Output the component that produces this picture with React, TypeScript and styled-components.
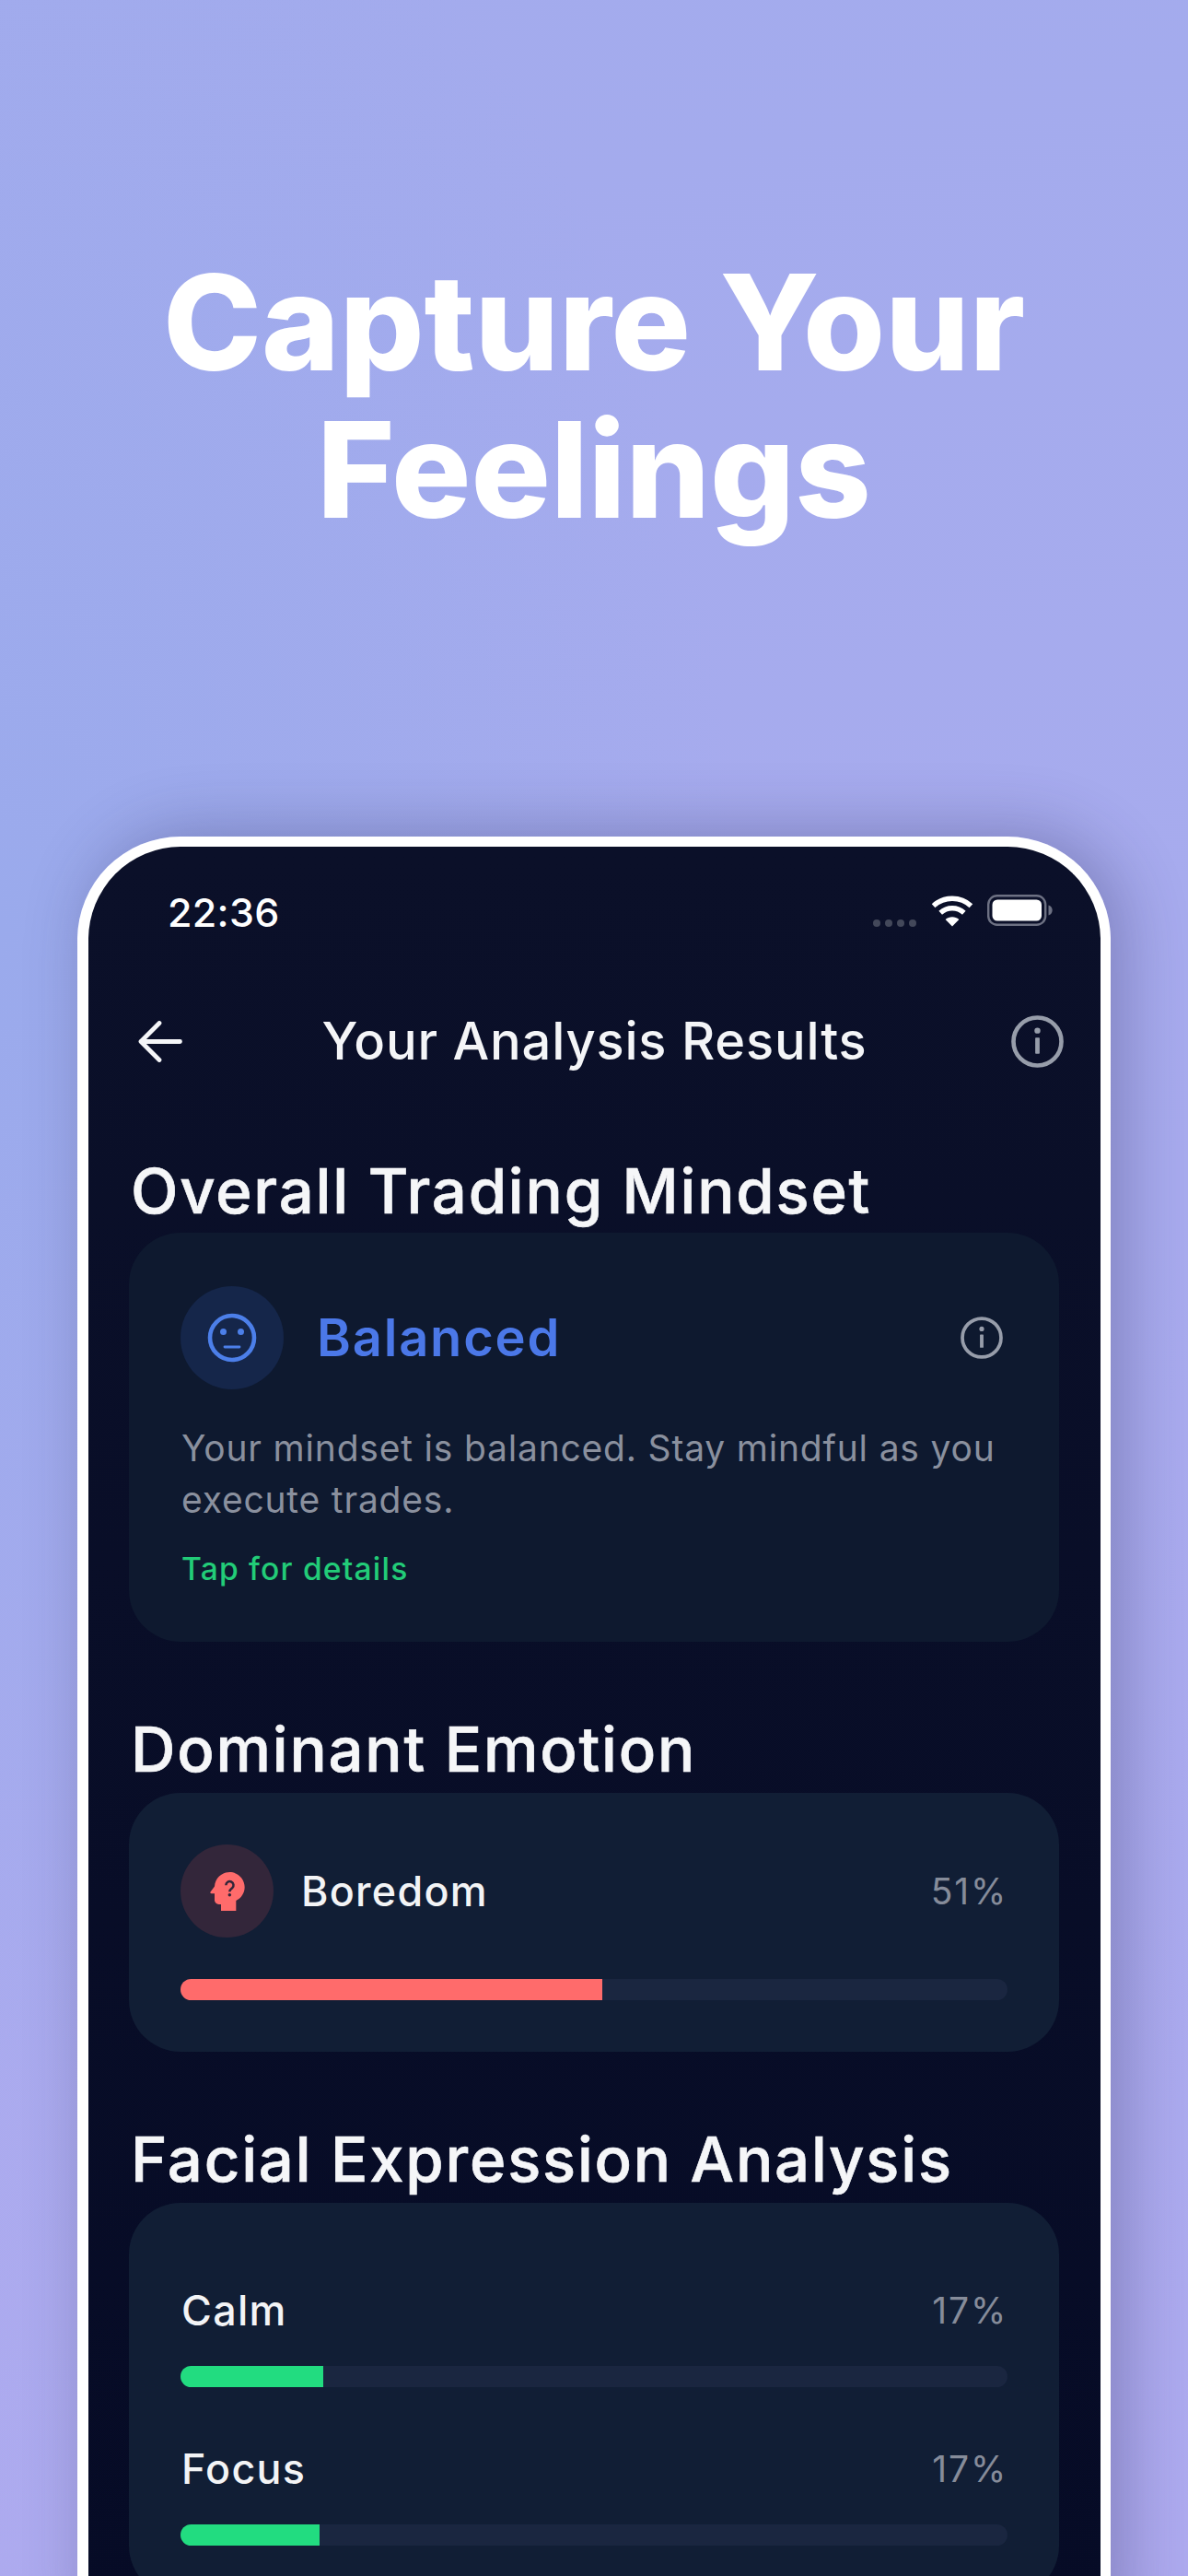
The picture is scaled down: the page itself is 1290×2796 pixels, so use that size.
import React from 'react';
import styled, { createGlobalStyle } from 'styled-components';

const Global = createGlobalStyle`
  html, body { margin: 0; padding: 0; }
  body { font-family: Inter, "Noto Sans", sans-serif; -webkit-font-smoothing: antialiased; }
`;

const Page = styled.div`
  width: 1290px;
  height: 2796px;
  overflow: hidden;
  box-sizing: border-box;
  padding-top: 270px;
  background:
    radial-gradient(ellipse 800px 1300px at 0% 36%, #9aaaec 0%, rgba(154, 170, 236, 0) 100%),
    linear-gradient(170deg, #a3abed 0%, #a8abee 50%, #aeaaef 100%);
`;

const Headline = styled.h1`
  margin: 0 0 318px;
  font-size: 144px;
  line-height: 160px;
  font-weight: 800;
  color: #fff;
  text-align: center;
`;

const Phone = styled.div`
  margin-left: 84px;
  width: 1122px;
  height: 1950px;
  box-sizing: border-box;
  border-style: solid;
  border-color: #fff;
  border-width: 11px 11px 0 12px;
  border-radius: 112px 112px 0 0;
  box-shadow: 14px -6px 70px rgba(40, 40, 90, 0.32);
  background: linear-gradient(180deg, #0b1029 0%, #060b26 100%);
  color: #fff;
`;

const StatusBar = styled.div`
  height: 169px;
  box-sizing: border-box;
  padding: 50px 52px 0 86px;
  display: flex;
  justify-content: space-between;
  align-items: flex-start;
`;

const Time = styled.span`
  font-size: 43px;
  line-height: 42px;
  font-weight: 500;
  letter-spacing: 0.3px;
`;

const StatusIcons = styled.div`
  display: flex;
  align-items: flex-start;
  gap: 15px;
  padding-top: 2px;
`;

const Dots = styled.div`
  display: flex;
  gap: 5px;
  margin: 27px 1px 0 0;
`;

const Dot = styled.i`
  width: 8px;
  height: 8px;
  border-radius: 50%;
  background: #43485a;
`;

const Nav = styled.header`
  height: 84px;
  padding: 0 40px;
  display: grid;
  grid-template-columns: 1fr auto 1fr;
  align-items: center;
`;

const NavTitle = styled.h2`
  margin: 0;
  font-size: 56px;
  line-height: 84px;
  font-weight: 500;
  letter-spacing: 0.8px;
  color: #f4f5f7;
`;

const NavEnd = styled.div`
  justify-self: end;
  display: flex;
`;

const NavStart = styled.div`
  display: flex;
  padding-left: 14px;
`;

const Content = styled.main`
  padding: 80px 45px 0 44px;
`;

const SectionTitle = styled.h3<{ $gap: number }>`
  margin: 0 0 ${p => p.$gap}px;
  padding-left: 2px;
  font-size: 67px;
  line-height: 82px;
  font-weight: 500;
  letter-spacing: 1.8px;
  -webkit-text-stroke: 0.7px #f5f6f8;
  color: #f5f6f8;
`;

const Card = styled.section<{ $bg: string; $pad: string }>`
  background: ${p => p.$bg};
  border-radius: 56px;
  padding: ${p => p.$pad};
  margin-bottom: 76px;
`;

const MindsetRow = styled.div`
  display: flex;
  align-items: center;
  margin-bottom: 36px;
`;

const IconCircle = styled.div<{ $size: number; $bg: string }>`
  flex: none;
  width: ${p => p.$size}px;
  height: ${p => p.$size}px;
  border-radius: 50%;
  background: ${p => p.$bg};
  display: flex;
  align-items: center;
  justify-content: center;
`;

const MindsetName = styled.span`
  margin-left: 36px;
  flex: 1;
  font-size: 56px;
  font-weight: 600;
  letter-spacing: 1.8px;
  color: #4b78e8;
`;

const CardInfo = styled.div`
  display: flex;
  margin-right: 5px;
`;

const Description = styled.p`
  margin: 0 0 27px;
  padding-left: 1px;
  font-size: 39px;
  line-height: 56px;
  letter-spacing: 0.8px;
  color: #8a909e;
`;

const TapLink = styled.span`
  display: block;
  padding-left: 1px;
  font-size: 33.6px;
  line-height: 40px;
  font-weight: 500;
  letter-spacing: 1.2px;
  color: #22cc78;
`;

const EmotionRow = styled.div`
  display: flex;
  align-items: center;
  margin-bottom: 45px;
`;

const EmotionName = styled.span`
  margin-left: 30px;
  flex: 1;
  font-size: 44.8px;
  font-weight: 500;
  letter-spacing: 1.3px;
  color: #f3f4f6;
`;

const Percent = styled.span`
  font-size: 39px;
  line-height: 54px;
  letter-spacing: 1.8px;
  color: #868c9a;
`;

const LabelRow = styled.div`
  display: flex;
  justify-content: space-between;
  align-items: center;
  margin-bottom: 33px;
`;

const Label = styled.span`
  padding-left: 1px;
  font-size: 44.8px;
  line-height: 54px;
  font-weight: 500;
  letter-spacing: 1.3px;
  color: #f3f4f6;
`;

const Track = styled.div<{ $mb?: number }>`
  height: 23px;
  border-radius: 11.5px;
  background: #1a2640;
  overflow: hidden;
  margin-bottom: ${p => p.$mb ?? 0}px;
`;

const Fill = styled.div<{ $color: string }>`
  height: 100%;
  background: ${p => p.$color};
`;

const InfoIcon = ({ size, color }: { size: number; color: string }) => (
  <svg width={size} height={size} viewBox="0 0 24 24" fill="none">
    <circle cx="12" cy="12" r="10.95" stroke={color} strokeWidth="1.95" />
    <rect x="11" y="10.2" width="2" height="7.4" rx="0.3" fill={color} />
    <circle cx="12" cy="7" r="1.35" fill={color} />
  </svg>
);

const BackArrow = () => (
  <svg width="48" height="45" viewBox="0 0 48 45" fill="none" stroke="#f5f6f8" strokeWidth="4.8" strokeLinecap="round" strokeLinejoin="round">
    <path d="M45.5 22.5H3M23 2.5 3 22.5l20 20" />
  </svg>
);

const Wifi = () => (
  <svg width="46" height="35" viewBox="0 0 46 35" fill="none" stroke="#fff" strokeWidth="5.4">
    <path d="M2.6 12.2C14 1.6 32 1.6 43.4 12.2" />
    <path d="M10.2 19.7c7.3-6.6 18.3-6.6 25.6 0" />
    <path d="M23 34.5 15.6 27c4.2-3.7 10.6-3.7 14.8 0z" fill="#fff" stroke="none" />
  </svg>
);

const Battery = () => (
  <svg width="71" height="34" viewBox="0 0 71 34" fill="none">
    <rect x="1.2" y="1.2" width="62" height="31.6" rx="9.5" stroke="#6d7183" strokeWidth="2.4" />
    <rect x="5.5" y="5.5" width="53.5" height="23" rx="5.5" fill="#fff" />
    <path d="M66.5 11.5c2.6.6 4.2 3 4.2 5.500s-1.600 4.900-4.200 5.500z" fill="#6d7183" />
  </svg>
);

const NeutralFace = () => (
  <svg width="54" height="54" viewBox="0 0 54 54" fill="none">
    <circle cx="27" cy="27" r="24" stroke="#4c7fe9" strokeWidth="4.6" />
    <circle cx="17.500" cy="20.500" r="3.500" fill="#4c7fe9" />
    <circle cx="36.500" cy="20.500" r="3.500" fill="#4c7fe9" />
    <path d="M19 37h16" stroke="#4c7fe9" strokeWidth="2.800" strokeLinecap="round" />
  </svg>
);

const HeadQuestion = () => (
  <svg width="56" height="56" viewBox="0 0 24 24">
    <path fill="#ff6b6b" d="M13 3C9.23 3 6.19 5.95 6 9.66L4.08 12.19C3.84 12.5 4.08 13 4.5 13H6V16C6 17.11 6.89 18 8 18H9V21H16V16.31C18.37 15.19 20 12.8 20 10C20 6.14 16.88 3 13 3Z" />
    <path fill="none" stroke="#33263a" strokeWidth="1.1" d="M11.300 9.100a1.750 1.750 0 1 1 2.900 1.300c-.7.550-1.200.8-1.200 1.700" />
    <circle cx="13" cy="13.600" r="0.750" fill="#33263a" />
  </svg>
);

const dots = [0, 1, 2, 3];

export default function App() {
  return (
    <Page>
      <Global />
      <Headline>
        Capture Your
        <br />
        Feelings
      </Headline>
      <Phone>
        <StatusBar>
          <Time>22:36</Time>
          <StatusIcons>
            <Dots>
              {dots.map(d => (
                <Dot key={d} />
              ))}
            </Dots>
            <Wifi />
            <Battery />
          </StatusIcons>
        </StatusBar>
        <Nav>
          <NavStart>
            <BackArrow />
          </NavStart>
          <NavTitle>Your Analysis Results</NavTitle>
          <NavEnd>
            <InfoIcon size={57} color="#979daa" />
          </NavEnd>
        </Nav>
        <Content>
          <SectionTitle $gap={4}>Overall Trading Mindset</SectionTitle>
          <Card $bg="#0e192f" $pad="58px 56px 59px">
            <MindsetRow>
              <IconCircle $size={112} $bg="#15264a">
                <NeutralFace />
              </IconCircle>
              <MindsetName>Balanced</MindsetName>
              <CardInfo>
                <InfoIcon size={46} color="#979daa" />
              </CardInfo>
            </MindsetRow>
            <Description>Your mindset is balanced. Stay mindful as you execute trades.</Description>
            <TapLink>Tap for details</TapLink>
          </Card>
          <SectionTitle $gap={6}>Dominant Emotion</SectionTitle>
          <Card $bg="#111e35" $pad="56px 56px">
            <EmotionRow>
              <IconCircle $size={101} $bg="#33263a">
                <HeadQuestion />
              </IconCircle>
              <EmotionName>Boredom</EmotionName>
              <Percent>51%</Percent>
            </EmotionRow>
            <Track>
              <Fill $color="#ff6b6b" style={{ width: '51%' }} />
            </Track>
          </Card>
          <SectionTitle $gap={6}>Facial Expression Analysis</SectionTitle>
          <Card $bg="#111e35" $pad="90px 56px 56px">
            <LabelRow>
              <Label>Calm</Label>
              <Percent>17%</Percent>
            </LabelRow>
            <Track $mb={62}>
              <Fill $color="#22dc80" style={{ width: '17.3%' }} />
            </Track>
            <LabelRow>
              <Label>Focus</Label>
              <Percent>17%</Percent>
            </LabelRow>
            <Track>
              <Fill $color="#22dc80" style={{ width: '16.8%' }} />
            </Track>
          </Card>
        </Content>
      </Phone>
    </Page>
  );
}
